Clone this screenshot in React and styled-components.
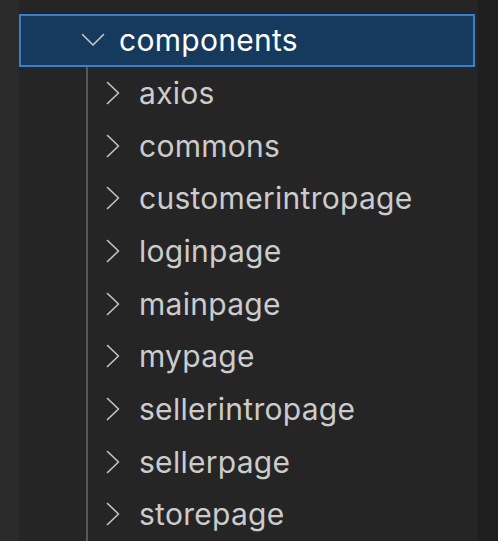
import React from 'react';
import styled, { createGlobalStyle } from 'styled-components';

const GlobalStyle = createGlobalStyle`
  html, body {
    margin: 0;
    padding: 0;
    background: #252526;
  }
  body {
    font-family: Inter, "Noto Sans", "Liberation Sans", sans-serif;
  }
`;

const Page = styled.div`
  display: flex;
  width: 498px;
  height: 541px;
  overflow: hidden;
  background: #252526;
`;

const SideStrip = styled.div`
  flex: 0 0 ${(p) => p.width}px;
  background: ${(p) => p.color};
`;

const Tree = styled.div`
  flex: 1;
  padding: 14px 3px 0 0;
  display: flex;
  flex-direction: column;
`;

const Row = styled.div`
  display: flex;
  align-items: center;
  flex: 0 0 52.67px;
  padding-left: 47px;
  box-sizing: border-box;
  background: ${(p) => (p.selected ? '#153a5e' : 'transparent')};
  outline: ${(p) => (p.selected ? '2px solid #3b7fd0' : 'none')};
  outline-offset: -2px;
  color: ${(p) => (p.selected ? '#ffffff' : '#cccccc')};
`;

const Indent = styled.span`
  flex: 0 0 20px;
  align-self: stretch;
  box-shadow: 2px 0 0 #585858;
`;

const Twistie = styled.span`
  flex: 0 0 53px;
  display: flex;
  align-items: center;
  justify-content: center;

  svg {
    display: block;
    fill: none;
    stroke: #c5c5c5;
    stroke-width: 1.6;
    stroke-linecap: round;
    stroke-linejoin: round;
  }
`;

const Label = styled.span`
  font-size: 30px;
  line-height: 1;
  white-space: nowrap;
  letter-spacing: 0.28px;
`;

const ChevronDown = () => (
  <svg width="24" height="14" viewBox="0 0 24 14">
    <path d="M1.5 1.5 L12 12 L22.5 1.5" />
  </svg>
);

const ChevronRight = () => (
  <svg width="14" height="24" viewBox="0 0 14 24">
    <path d="M1.5 1.5 L12.5 12 L1.5 22.5" />
  </svg>
);

const folders = [
  'axios',
  'commons',
  'customerintropage',
  'loginpage',
  'mainpage',
  'mypage',
  'sellerintropage',
  'sellerpage',
  'storepage',
];

const App = () => (
  <>
    <GlobalStyle />
    <Page>
      <SideStrip width={19} color="#2b2b2b" />
      <Tree>
        <Row selected>
          <Twistie>
            <ChevronDown />
          </Twistie>
          <Label>components</Label>
        </Row>
        {folders.map((name) => (
          <Row key={name}>
            <Indent />
            <Twistie>
              <ChevronRight />
            </Twistie>
            <Label>{name}</Label>
          </Row>
        ))}
      </Tree>
      <SideStrip width={20} color="#1f1f1f" />
    </Page>
  </>
);

export default App;
